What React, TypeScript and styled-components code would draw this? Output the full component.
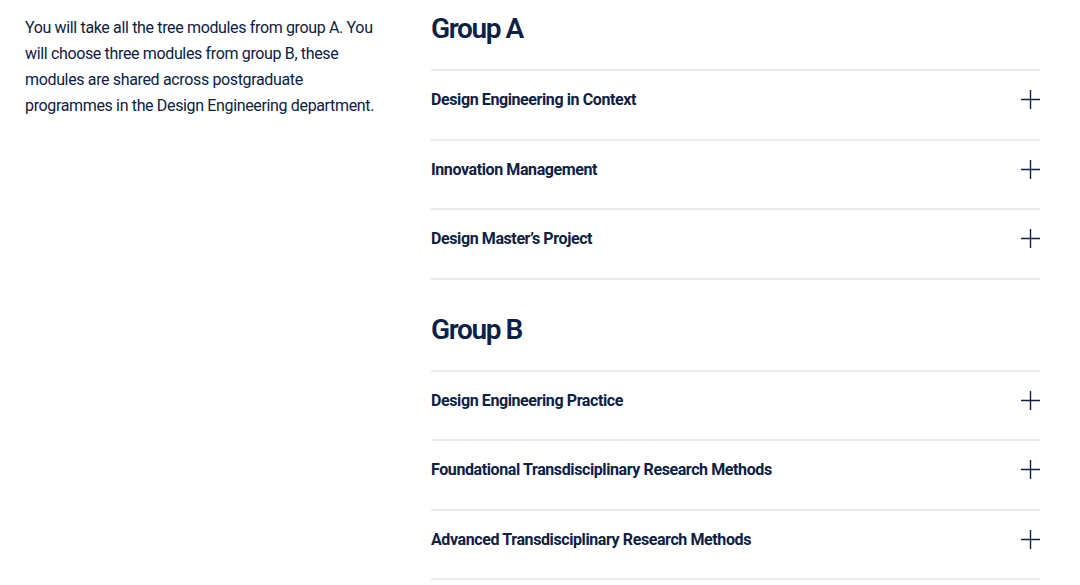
import styled, { createGlobalStyle } from 'styled-components';

const GlobalStyle = createGlobalStyle`
  body {
    margin: 0;
    background: #ffffff;
    font-family: Roboto, "Noto Sans", sans-serif;
    color: #0c2145;
  }
`;

const groups = [
  {
    title: 'Group A',
    modules: ['Design Engineering in Context', 'Innovation Management', 'Design Master’s Project'],
  },
  {
    title: 'Group B',
    modules: [
      'Design Engineering Practice',
      'Foundational Transdisciplinary Research Methods',
      'Advanced Transdisciplinary Research Methods',
    ],
  },
];

const PlusIcon = () => (
  <svg width="19" height="19" viewBox="0 0 19 19" fill="none">
    <path d="M9.5 0v19M0 9.5h19" stroke="#0c2145" strokeWidth="1.4" />
  </svg>
);

const App = () => {
  return (
    <>
      <GlobalStyle />
      <Page>
        <Intro>
          You will take all the tree modules from group A. You will choose three modules from
          group B, these modules are shared across postgraduate programmes in the Design
          Engineering department.
        </Intro>
        <Groups>
          {groups.map((group) => (
            <Group key={group.title}>
              <Heading>{group.title}</Heading>
              <List>
                {group.modules.map((mod) => (
                  <Row key={mod}>
                    <RowTitle>{mod}</RowTitle>
                    <PlusIcon />
                  </Row>
                ))}
              </List>
            </Group>
          ))}
        </Groups>
      </Page>
    </>
  );
};

const Page = styled.div`
  display: grid;
  grid-template-columns: 365px 609px;
  column-gap: 41px;
  padding: 12px 40px 0 25px;
`;

const Intro = styled.p`
  margin: 3px 0 0;
  font-size: 16px;
  line-height: 26px;
  letter-spacing: -0.35px;
`;

const Groups = styled.div`
  display: flex;
  flex-direction: column;
  gap: 33px;
`;

const Group = styled.section`
  display: flex;
  flex-direction: column;
`;

const Heading = styled.h2`
  margin: 0 0 23px;
  font-size: 28px;
  line-height: 34px;
  font-weight: 600;
  letter-spacing: -1.4px;
`;

const List = styled.div`
  display: flex;
  flex-direction: column;
  border-bottom: 2px solid #ebebeb;
`;

const Row = styled.div`
  display: flex;
  align-items: center;
  justify-content: space-between;
  box-sizing: border-box;
  height: 69.5px;
  padding-bottom: 10px;
  border-top: 2px solid #ebebeb;
  cursor: pointer;
`;

const RowTitle = styled.span`
  font-size: 16px;
  font-weight: 700;
  letter-spacing: -0.4px;
`;

export default App;
